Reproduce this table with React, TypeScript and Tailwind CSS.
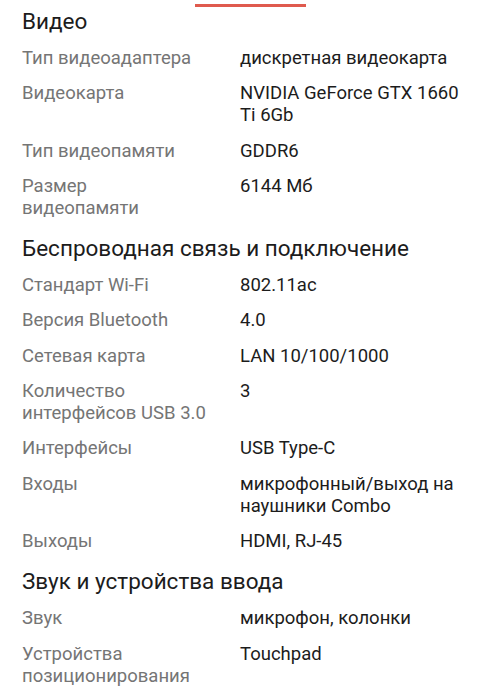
import React from "react";

type Spec = { label: string[]; value: string[] };

const sections: { title: string; rows: Spec[] }[] = [
  {
    title: "Видео",
    rows: [
      { label: ["Тип видеоадаптера"], value: ["дискретная видеокарта"] },
      { label: ["Видеокарта"], value: ["NVIDIA GeForce GTX 1660", "Ti 6Gb"] },
      { label: ["Тип видеопамяти"], value: ["GDDR6"] },
      { label: ["Размер", "видеопамяти"], value: ["6144 Мб"] },
    ],
  },
  {
    title: "Беспроводная связь и подключение",
    rows: [
      { label: ["Стандарт Wi-Fi"], value: ["802.11ac"] },
      { label: ["Версия Bluetooth"], value: ["4.0"] },
      { label: ["Сетевая карта"], value: ["LAN 10/100/1000"] },
      { label: ["Количество", "интерфейсов USB 3.0"], value: ["3"] },
      { label: ["Интерфейсы"], value: ["USB Type-C"] },
      { label: ["Входы"], value: ["микрофонный/выход на", "наушники Combo"] },
      { label: ["Выходы"], value: ["HDMI, RJ-45"] },
    ],
  },
  {
    title: "Звук и устройства ввода",
    rows: [
      { label: ["Звук"], value: ["микрофон, колонки"] },
      { label: ["Устройства", "позиционирования"], value: ["Touchpad"] },
    ],
  },
];

function Lines({ lines }: { lines: string[] }) {
  return (
    <>
      {lines.map((l, i) => (
        <span key={i} className="block whitespace-nowrap">
          {l}
        </span>
      ))}
    </>
  );
}

export default function App() {
  return (
    <div
      className="min-h-[699px] w-[501px] overflow-hidden bg-white"
      style={{ fontFamily: "Roboto, 'Noto Sans', sans-serif" }}
    >
      {/* active tab indicator */}
      <div className="flex h-[7px] items-end pl-[195px]">
        <div className="h-[3px] w-[111px] bg-[#df5a4e]" />
      </div>

      <div className="px-[22px]">
        {sections.map((s, si) => (
          <section key={s.title} className={si === 0 ? "" : "mt-[9px]"}>
            <h2 className="text-[22.5px] leading-[28px] text-[#1c1c1c]">
              {s.title}
            </h2>
            <div className="mt-[5px]">
              {s.rows.map((r) => (
                <div
                  key={r.label.join(" ")}
                  className="flex pt-[7px] pb-[6.3px] text-[18.5px] leading-[22px]"
                >
                  <div className="w-[218px] shrink-0 text-[#757575]">
                    <Lines lines={r.label} />
                  </div>
                  <div className="flex-1 text-[#1c1c1c]">
                    <Lines lines={r.value} />
                  </div>
                </div>
              ))}
            </div>
          </section>
        ))}
      </div>
    </div>
  );
}
